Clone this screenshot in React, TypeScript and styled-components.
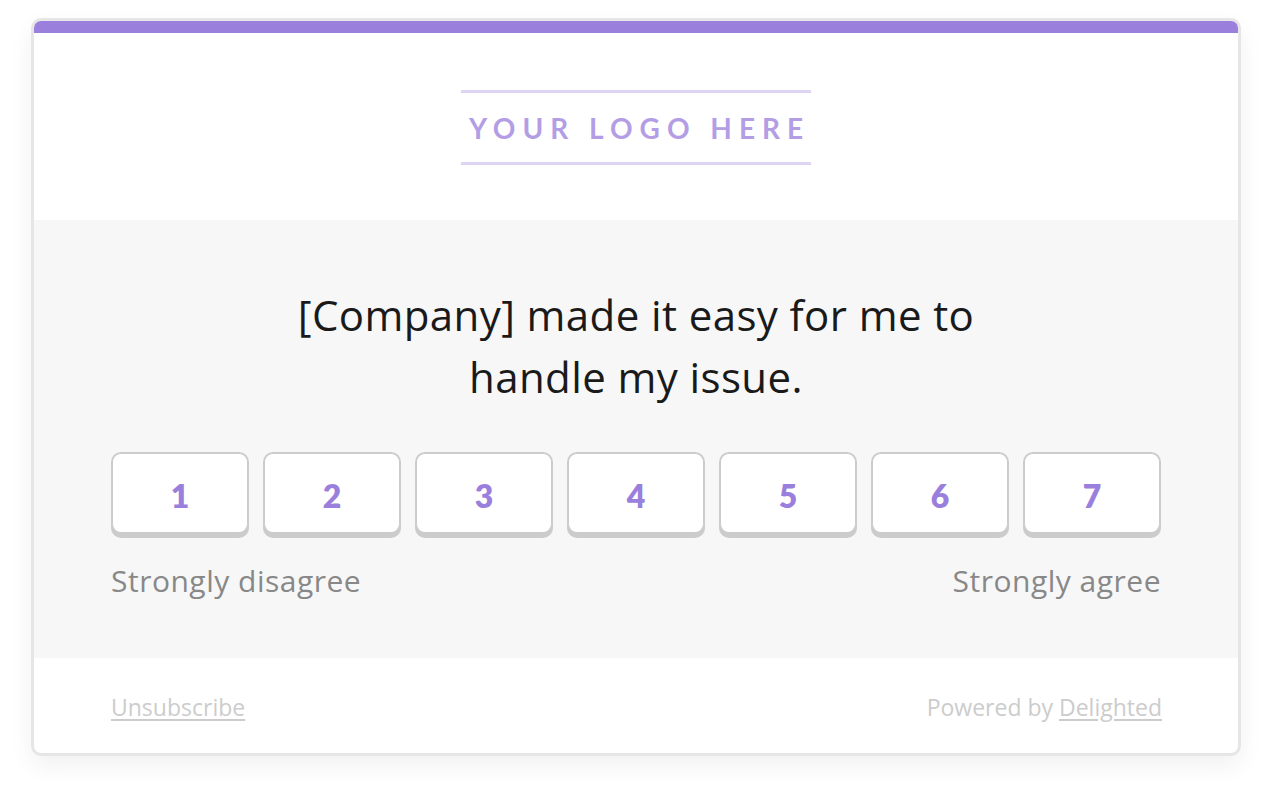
import styled, { createGlobalStyle } from 'styled-components'

const GlobalStyle = createGlobalStyle`
  html, body {
    margin: 0;
    padding: 0;
    background: #ffffff;
  }
  body {
    font-family: "Open Sans", Lato, sans-serif;
  }
`

const Page = styled.div`
  padding: 18px 31px 40px 31px;
`

const Card = styled.div`
  width: 1210px;
  box-sizing: border-box;
  border: 3px solid #e6e6e6;
  border-radius: 10px;
  overflow: hidden;
  background: #ffffff;
  box-shadow: 0 10px 24px rgba(0, 0, 0, 0.06);
`

const TopBar = styled.div`
  height: 12px;
  background: #9a7fdc;
`

const Header = styled.header`
  display: flex;
  justify-content: center;
  padding: 57px 0 55px;
`

const Logo = styled.div`
  width: 350px;
  height: 75px;
  box-sizing: border-box;
  border-top: 3px solid #ddd5f3;
  border-bottom: 3px solid #ddd5f3;
  display: flex;
  align-items: center;
  justify-content: center;
  font-family: Lato, sans-serif;
  font-size: 28px;
  font-weight: 700;
  letter-spacing: 7px;
  padding-left: 7px;
  color: #b39ee6;
`

const Body = styled.section`
  background: #f7f7f7;
  padding: 64px 77px 59px;
`

const Question = styled.h1`
  margin: 0 auto;
  width: 760px;
  text-align: center;
  font-size: 42px;
  letter-spacing: 0.4px;
  line-height: 62px;
  font-weight: 400;
  color: #1a1a1a;
`

const Scale = styled.div`
  display: grid;
  grid-template-columns: repeat(7, 1fr);
  gap: 14px;
  margin-top: 44px;
`

const ScaleButton = styled.button`
  height: 82px;
  box-sizing: border-box;
  background: #ffffff;
  border: 2px solid #cccccc;
  border-radius: 10px;
  box-shadow: 0 4px 0 #cccccc;
  font-family: Lato, sans-serif;
  font-size: 32px;
  font-weight: 800;
  color: #9a7fdc;
  padding: 4px 0 0;
  cursor: pointer;
`

const Labels = styled.div`
  display: flex;
  justify-content: space-between;
  margin-top: 29px;
  font-size: 30px;
  letter-spacing: 0.5px;
  line-height: 36px;
  color: #888888;
`

const Footer = styled.footer`
  display: flex;
  justify-content: space-between;
  align-items: center;
  height: 95px;
  padding: 2px 76px 0 77px;
  box-sizing: border-box;
  font-size: 23px;
  color: #cccccc;
`

const FooterLink = styled.a`
  color: #cccccc;
  text-decoration: underline;
  text-underline-offset: 3px;
`

const App = () => {
  const options = [1, 2, 3, 4, 5, 6, 7]

  return (
    <Page>
      <GlobalStyle />
      <Card>
        <TopBar />
        <Header>
          <Logo>YOUR LOGO HERE</Logo>
        </Header>
        <Body>
          <Question>[Company] made it easy for me to handle my issue.</Question>
          <Scale>
            {options.map((n) => (
              <ScaleButton key={n}>{n}</ScaleButton>
            ))}
          </Scale>
          <Labels>
            <span>Strongly disagree</span>
            <span>Strongly agree</span>
          </Labels>
        </Body>
        <Footer>
          <FooterLink href="#">Unsubscribe</FooterLink>
          <span>
            Powered by <FooterLink href="#">Delighted</FooterLink>
          </span>
        </Footer>
      </Card>
    </Page>
  )
}

export default App
